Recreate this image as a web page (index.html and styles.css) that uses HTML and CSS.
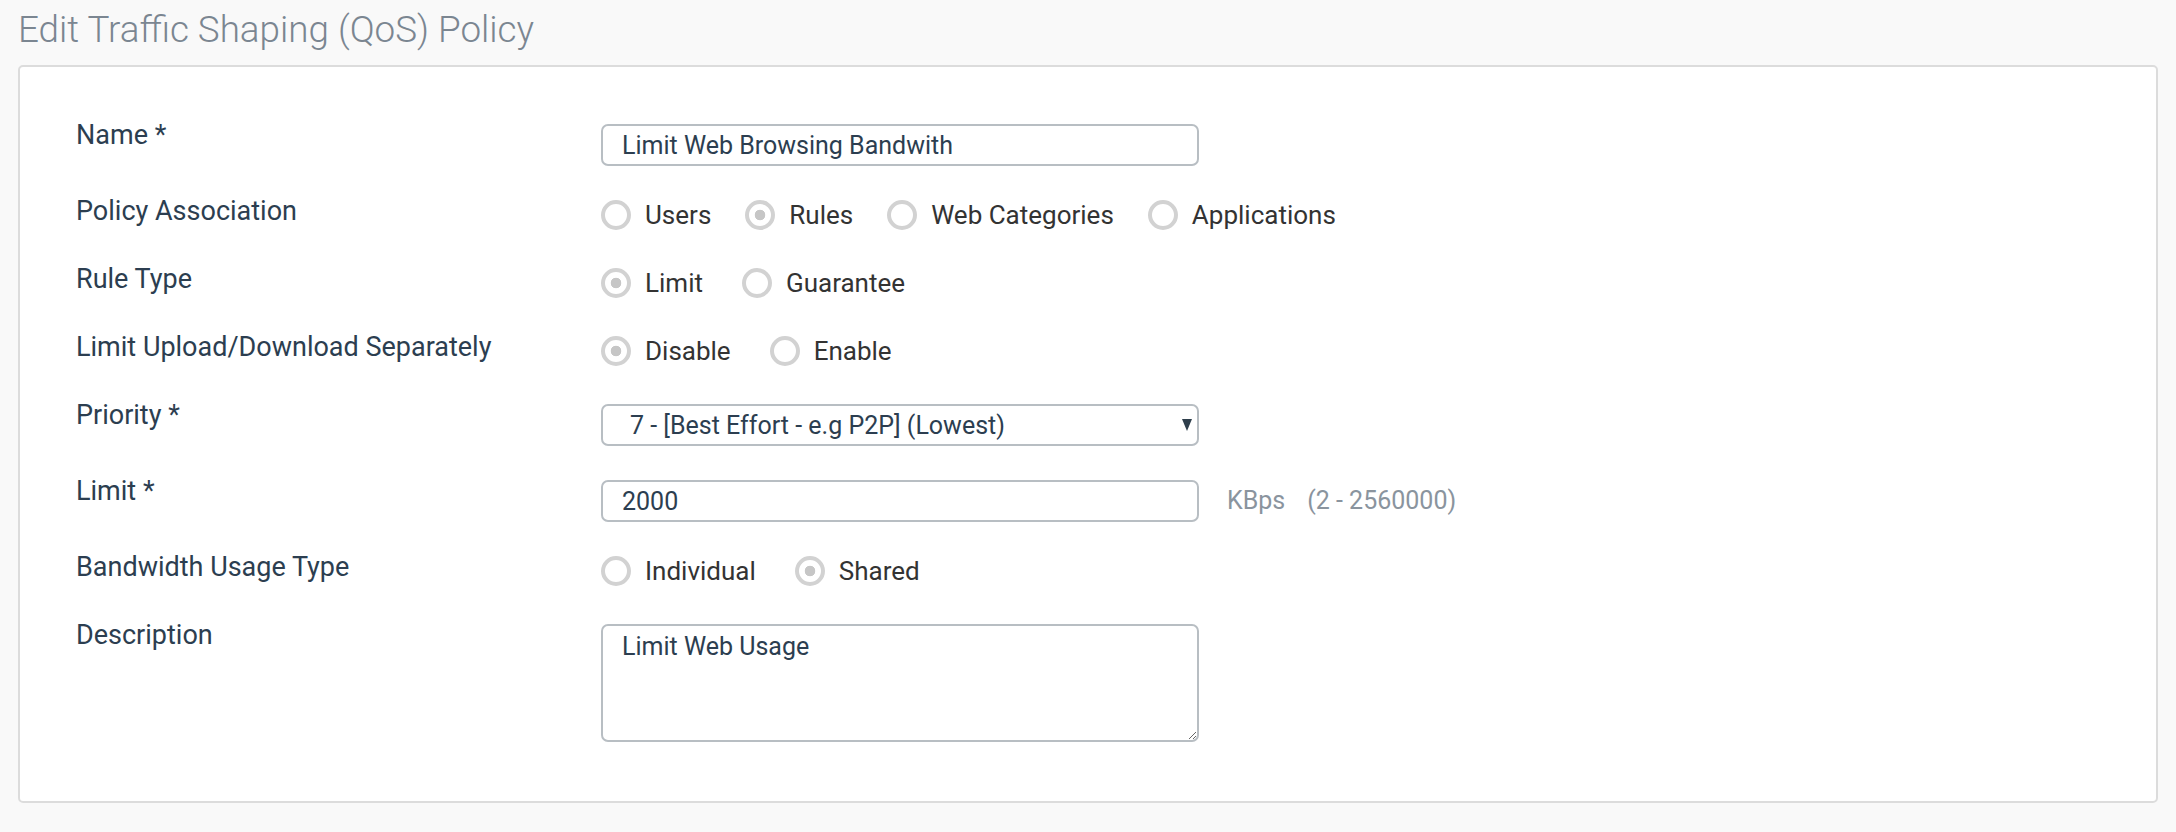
FILE: index.html
```html
<!DOCTYPE html>
<html lang="en">
<head>
<meta charset="utf-8">
<title>Edit Traffic Shaping (QoS) Policy</title>
<link rel="stylesheet" href="styles.css">
</head>
<body>
<h1 class="page-title">Edit Traffic Shaping (QoS) Policy</h1>
<form class="card">
  <div class="row row-input">
    <label class="label">Name *</label>
    <input class="field" type="text" value="Limit Web Browsing Bandwith">
  </div>
  <div class="row row-radio">
    <span class="label">Policy Association</span>
    <div class="options">
      <label class="opt"><input class="radio" type="radio" name="assoc"><span>Users</span></label>
      <label class="opt"><input class="radio" type="radio" name="assoc" checked><span>Rules</span></label>
      <label class="opt"><input class="radio" type="radio" name="assoc"><span>Web Categories</span></label>
      <label class="opt"><input class="radio" type="radio" name="assoc"><span>Applications</span></label>
    </div>
  </div>
  <div class="row row-radio">
    <span class="label">Rule Type</span>
    <div class="options options-wide">
      <label class="opt"><input class="radio" type="radio" name="rtype" checked><span>Limit</span></label>
      <label class="opt"><input class="radio" type="radio" name="rtype"><span>Guarantee</span></label>
    </div>
  </div>
  <div class="row row-radio">
    <span class="label">Limit Upload/Download Separately</span>
    <div class="options options-wide">
      <label class="opt"><input class="radio" type="radio" name="sep" checked><span>Disable</span></label>
      <label class="opt"><input class="radio" type="radio" name="sep"><span>Enable</span></label>
    </div>
  </div>
  <div class="row row-input">
    <span class="label">Priority *</span>
    <div class="field select">
      <span class="select-text">7 - [Best Effort - e.g P2P] (Lowest)</span>
      <span class="select-arrow"></span>
    </div>
  </div>
  <div class="row row-input">
    <label class="label">Limit *</label>
    <input class="field" type="text" value="2000">
    <span class="unit">KBps</span>
    <span class="unit range">(2 - 2560000)</span>
  </div>
  <div class="row row-radio">
    <span class="label">Bandwidth Usage Type</span>
    <div class="options options-wide">
      <label class="opt"><input class="radio" type="radio" name="usage"><span>Individual</span></label>
      <label class="opt"><input class="radio" type="radio" name="usage" checked><span>Shared</span></label>
    </div>
  </div>
  <div class="row row-area">
    <label class="label">Description</label>
    <textarea class="field area">Limit Web Usage</textarea>
  </div>
</form>
</body>
</html>
```
FILE: styles.css
```css
html, body {
  margin: 0;
  padding: 0;
  background: #f9f9f9;
}

body {
  font-family: Roboto, "Liberation Sans", Arial, sans-serif;
  color: #2c3e50;
}

.page-title {
  margin: 0;
  height: 65px;
  box-sizing: border-box;
  padding-left: 18px;
  line-height: 60px;
  font-size: 36.8px;
  font-weight: 300;
  color: #7b8691;
}

.card {
  margin: 0 18px;
  background: #fff;
  border: 2px solid #dcdcdc;
  border-radius: 5px;
  padding: 57px 56px 59px 56px;
  display: flex;
  flex-direction: column;
  gap: 26px;
}

.row {
  display: flex;
  align-items: flex-start;
}

.row-input {
  height: 50px;
}

.row-radio {
  height: 42px;
}

.label {
  flex: 0 0 525px;
  font-size: 27px;
  line-height: 22px;
  color: #2c3e50;
}

.field {
  box-sizing: border-box;
  width: 598px;
  height: 42px;
  margin: 0;
  border: 2px solid #b8bec3;
  border-radius: 7px;
  background: #fff;
  padding: 0 0 0 19px;
  font-family: Roboto, "Liberation Sans", Arial, sans-serif;
  font-size: 25px;
  color: #2c3e50;
  outline: none;
}

.select {
  display: flex;
  align-items: center;
  justify-content: space-between;
  padding-left: 27px;
  padding-right: 5px;
}

.select-arrow {
  width: 0;
  height: 0;
  border-left: 5px solid transparent;
  border-right: 5px solid transparent;
  border-top: 12px solid #2f3f4c;
}

.unit {
  margin-left: 28px;
  font-size: 25px;
  line-height: 42px;
  color: #8a949e;
}

.unit.range {
  margin-left: 22px;
}

.options {
  display: flex;
  align-items: center;
  gap: 34px;
  height: 30px;
}

.options-wide {
  gap: 39px;
}

.opt {
  display: flex;
  align-items: center;
  gap: 14px;
  font-size: 26px;
  color: #333;
}

.radio {
  appearance: none;
  -webkit-appearance: none;
  box-sizing: border-box;
  width: 30px;
  height: 30px;
  margin: 0;
  border: 4px solid #d2d2d2;
  border-radius: 50%;
  background: #fff;
}

.radio:checked {
  background: radial-gradient(circle, #c6c6c6 0 5px, #fff 5.6px);
}

.area {
  height: 118px;
  padding-top: 6px;
  line-height: 30px;
  resize: vertical;
}
```
